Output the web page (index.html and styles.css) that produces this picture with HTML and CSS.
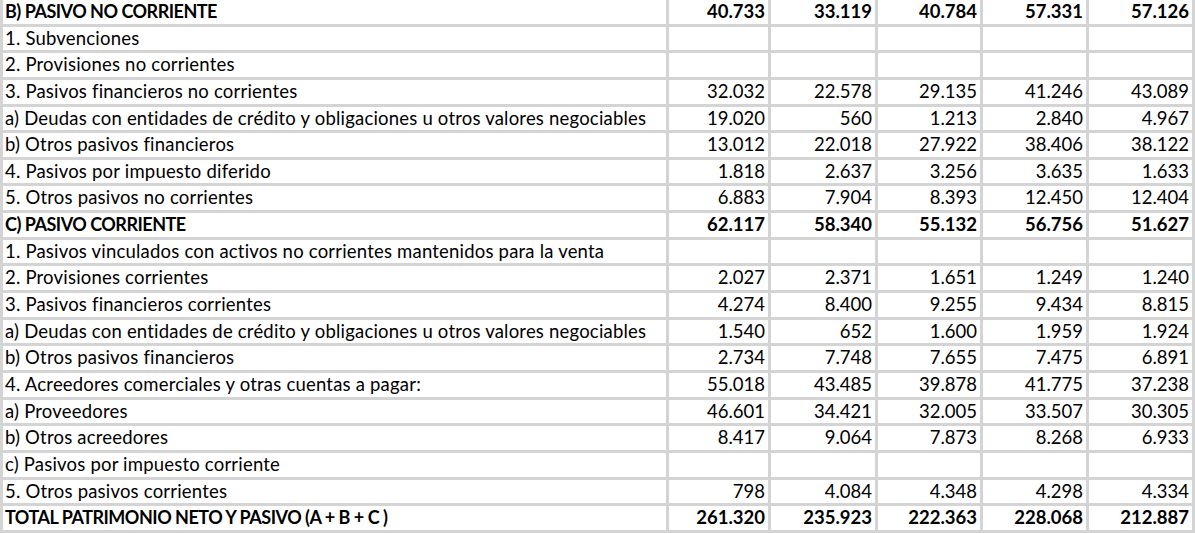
FILE: index.html
```html
<!DOCTYPE html>
<html lang="es">
<head>
<meta charset="utf-8">
<title>Pasivo</title>
<link rel="stylesheet" href="styles.css">
</head>
<body>
<div class="sheet">
  <div class="row bold"><div class="c l">B) PASIVO NO CORRIENTE</div><div class="c n">40.733</div><div class="c n">33.119</div><div class="c n">40.784</div><div class="c n">57.331</div><div class="c n">57.126</div></div>
  <div class="row"><div class="c l">1. Subvenciones</div><div class="c n"></div><div class="c n"></div><div class="c n"></div><div class="c n"></div><div class="c n"></div></div>
  <div class="row"><div class="c l">2. Provisiones no corrientes</div><div class="c n"></div><div class="c n"></div><div class="c n"></div><div class="c n"></div><div class="c n"></div></div>
  <div class="row"><div class="c l">3. Pasivos financieros no corrientes</div><div class="c n">32.032</div><div class="c n">22.578</div><div class="c n">29.135</div><div class="c n">41.246</div><div class="c n">43.089</div></div>
  <div class="row"><div class="c l">a) Deudas con entidades de crédito y obligaciones u otros valores negociables</div><div class="c n">19.020</div><div class="c n">560</div><div class="c n">1.213</div><div class="c n">2.840</div><div class="c n">4.967</div></div>
  <div class="row"><div class="c l">b) Otros pasivos financieros</div><div class="c n">13.012</div><div class="c n">22.018</div><div class="c n">27.922</div><div class="c n">38.406</div><div class="c n">38.122</div></div>
  <div class="row"><div class="c l">4. Pasivos por impuesto diferido</div><div class="c n">1.818</div><div class="c n">2.637</div><div class="c n">3.256</div><div class="c n">3.635</div><div class="c n">1.633</div></div>
  <div class="row"><div class="c l">5. Otros pasivos no corrientes</div><div class="c n">6.883</div><div class="c n">7.904</div><div class="c n">8.393</div><div class="c n">12.450</div><div class="c n">12.404</div></div>
  <div class="row bold"><div class="c l">C) PASIVO CORRIENTE</div><div class="c n">62.117</div><div class="c n">58.340</div><div class="c n">55.132</div><div class="c n">56.756</div><div class="c n">51.627</div></div>
  <div class="row"><div class="c l">1. Pasivos vinculados con activos no corrientes mantenidos para la venta</div><div class="c n"></div><div class="c n"></div><div class="c n"></div><div class="c n"></div><div class="c n"></div></div>
  <div class="row"><div class="c l">2. Provisiones corrientes</div><div class="c n">2.027</div><div class="c n">2.371</div><div class="c n">1.651</div><div class="c n">1.249</div><div class="c n">1.240</div></div>
  <div class="row"><div class="c l">3. Pasivos financieros corrientes</div><div class="c n">4.274</div><div class="c n">8.400</div><div class="c n">9.255</div><div class="c n">9.434</div><div class="c n">8.815</div></div>
  <div class="row"><div class="c l">a) Deudas con entidades de crédito y obligaciones u otros valores negociables</div><div class="c n">1.540</div><div class="c n">652</div><div class="c n">1.600</div><div class="c n">1.959</div><div class="c n">1.924</div></div>
  <div class="row"><div class="c l">b) Otros pasivos financieros</div><div class="c n">2.734</div><div class="c n">7.748</div><div class="c n">7.655</div><div class="c n">7.475</div><div class="c n">6.891</div></div>
  <div class="row"><div class="c l">4. Acreedores comerciales y otras cuentas a pagar:</div><div class="c n">55.018</div><div class="c n">43.485</div><div class="c n">39.878</div><div class="c n">41.775</div><div class="c n">37.238</div></div>
  <div class="row"><div class="c l">a) Proveedores</div><div class="c n">46.601</div><div class="c n">34.421</div><div class="c n">32.005</div><div class="c n">33.507</div><div class="c n">30.305</div></div>
  <div class="row"><div class="c l">b) Otros acreedores</div><div class="c n">8.417</div><div class="c n">9.064</div><div class="c n">7.873</div><div class="c n">8.268</div><div class="c n">6.933</div></div>
  <div class="row"><div class="c l">c) Pasivos por impuesto corriente</div><div class="c n"></div><div class="c n"></div><div class="c n"></div><div class="c n"></div><div class="c n"></div></div>
  <div class="row"><div class="c l">5. Otros pasivos corrientes</div><div class="c n">798</div><div class="c n">4.084</div><div class="c n">4.348</div><div class="c n">4.298</div><div class="c n">4.334</div></div>
  <div class="row bold"><div class="c l">TOTAL PATRIMONIO NETO Y PASIVO (A + B + C )</div><div class="c n">261.320</div><div class="c n">235.923</div><div class="c n">222.363</div><div class="c n">228.068</div><div class="c n">212.887</div></div>
</div>
</body>
</html>
```

FILE: styles.css
```css
html, body {
  margin: 0;
  padding: 0;
  background: #ffffff;
}

.sheet {
  box-sizing: border-box;
  width: 1195px;
  display: grid;
  grid-template-columns: 663px 99px 104px 102px 103px 103px;
  grid-auto-rows: 23.65px;
  gap: 3px;
  padding: 0 3px 3px 3px;
  background: #d4d4d4;
  font-family: Lato, "Liberation Sans", sans-serif;
  font-size: 18.5px;
  letter-spacing: 0.2px;
  font-variant-ligatures: none;
  color: #000000;
}

.row {
  display: contents;
}

.c {
  background: #ffffff;
  line-height: 22.5px;
  white-space: nowrap;
  overflow: hidden;
}

.l {
  padding-left: 2px;
  text-align: left;
}

.n {
  padding-right: 3px;
  text-align: right;
  letter-spacing: 0;
}

.bold .c {
  font-weight: 700;
}

.bold .l {
  font-size: 18px;
  letter-spacing: -0.5px;
}
```
